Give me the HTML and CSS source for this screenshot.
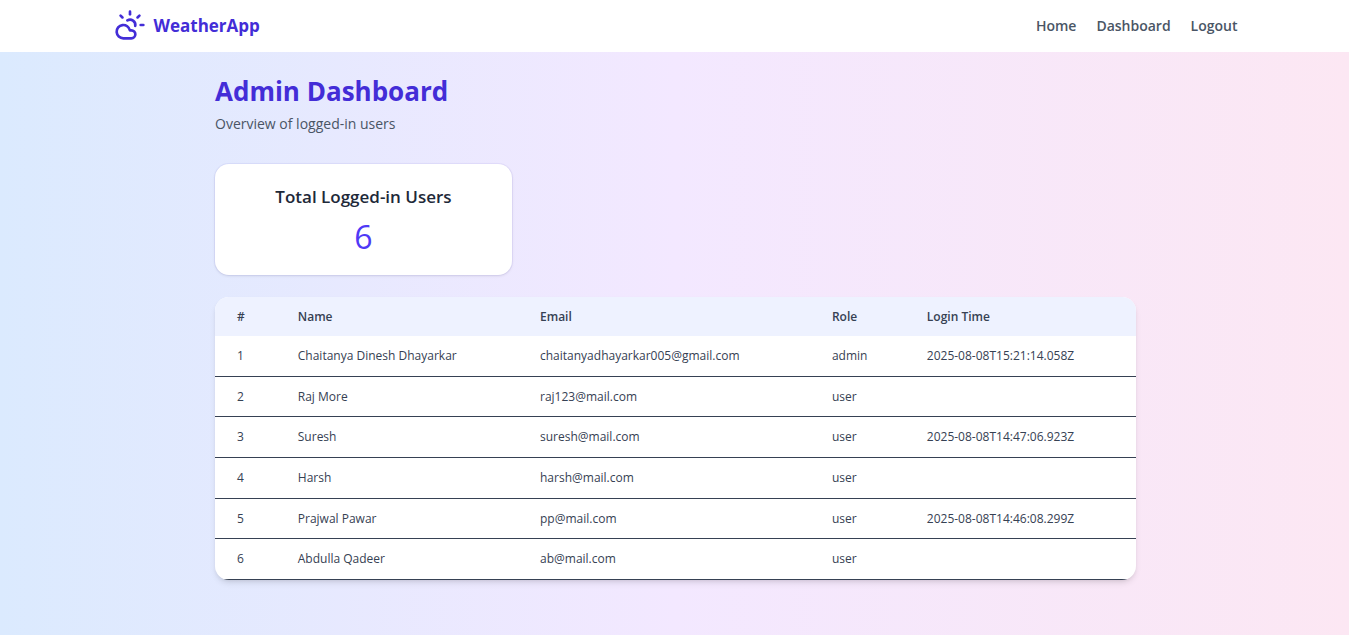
FILE: index.html
```html
<!DOCTYPE html>
<html lang="en">
<head>
<meta charset="utf-8">
<meta name="viewport" content="width=device-width, initial-scale=1">
<title>WeatherApp</title>
<link rel="stylesheet" href="styles.css">
</head>
<body>
<header class="topbar">
  <div class="topbar-inner">
    <a class="brand" href="#">
      <svg class="brand-icon" viewBox="0 0 24 24" fill="none" stroke="currentColor" stroke-width="2" stroke-linecap="round" stroke-linejoin="round" aria-hidden="true">
        <path d="M12 2v2"/><path d="m4.93 4.93 1.41 1.41"/><path d="M20 12h2"/><path d="m19.07 4.93-1.41 1.41"/>
        <path d="M15.947 12.65a4 4 0 0 0-5.925-4.128"/>
        <path d="M13 22H7a5 5 0 1 1 4.9-6H13a3 3 0 0 1 0 6Z"/>
      </svg>
      <span>WeatherApp</span>
    </a>
    <nav class="links">
      <a href="#">Home</a>
      <a href="#">Dashboard</a>
      <a href="#">Logout</a>
    </nav>
  </div>
</header>
<main class="content">
  <h1 class="title">Admin Dashboard</h1>
  <p class="subtitle">Overview of logged-in users</p>
  <div class="stats">
    <section class="stat">
      <h2 class="stat-label">Total Logged-in Users</h2>
      <p class="stat-value">6</p>
    </section>
  </div>
  <div class="panel">
    <table class="users">
      <colgroup><col class="c-num"><col class="c-name"><col class="c-email"><col class="c-role"><col class="c-time"></colgroup>
      <thead><tr><th>#</th><th>Name</th><th>Email</th><th>Role</th><th>Login Time</th></tr></thead>
      <tbody>
        <tr><td>1</td><td>Chaitanya Dinesh Dhayarkar</td><td>chaitanyadhayarkar005@gmail.com</td><td>admin</td><td>2025-08-08T15:21:14.058Z</td></tr>
        <tr><td>2</td><td>Raj More</td><td>raj123@mail.com</td><td>user</td><td></td></tr>
        <tr><td>3</td><td>Suresh</td><td>suresh@mail.com</td><td>user</td><td>2025-08-08T14:47:06.923Z</td></tr>
        <tr><td>4</td><td>Harsh</td><td>harsh@mail.com</td><td>user</td><td></td></tr>
        <tr><td>5</td><td>Prajwal Pawar</td><td>pp@mail.com</td><td>user</td><td>2025-08-08T14:46:08.299Z</td></tr>
        <tr><td>6</td><td>Abdulla Qadeer</td><td>ab@mail.com</td><td>user</td><td></td></tr>
      </tbody>
    </table>
  </div>
</main>
</body>
</html>
```
FILE: styles.css
```css
* { box-sizing: border-box; }
body {
  margin: 0;
  min-height: 100vh;
  font-family: "Open Sans", "Noto Sans", sans-serif;
  color: #364153;
  background: linear-gradient(to right, #dbeafe, #f3e8ff 50%, #fce7f3);
}
h1, h2, p { margin: 0; }
a { color: inherit; text-decoration: none; }

.topbar { background: #fff; }
.topbar-inner {
  display: flex;
  align-items: center;
  justify-content: space-between;
  max-width: 1152px;
  height: 52px;
  margin: 0 auto;
  padding: 0 13px 2px 15px;
}
.brand {
  display: flex;
  align-items: center;
  gap: 8px;
  color: #432dd7;
  font-size: 17px;
  font-weight: 700;
}
.brand-icon { width: 32px; height: 32px; }
.links {
  display: flex;
  gap: 20px;
  color: #4a5565;
  font-size: 14px;
  font-weight: 600;
}

.content {
  max-width: 923px;
  margin: 0 auto;
  padding: 22px 0 55px 2px;
}
.title {
  color: #432dd7;
  font-size: 26px;
  line-height: 34px;
  font-weight: 700;
}
.subtitle {
  margin-top: 6px;
  color: #4a5565;
  font-size: 14px;
  line-height: 20px;
}
.stats {
  display: grid;
  grid-template-columns: repeat(3, 1fr);
  gap: 15px;
  margin: 30px 0 22px;
}
.stat {
  padding: 20px 22px;
  border-radius: 14px;
  background: #fff;
  text-align: center;
  box-shadow: 0 0 0 1px #432dd70f, 0 1px 3px #0000001a;
}
.stat-label {
  color: #1e2939;
  font-size: 17px;
  line-height: 26px;
  font-weight: 600;
}
.stat-value {
  margin-top: 9px;
  color: #4f39f6;
  font-size: 32px;
  line-height: 36px;
}

.panel {
  overflow: hidden;
  border-radius: 14px;
  background: #fff;
  box-shadow: 0 4px 6px -1px #0000001a, 0 2px 4px -2px #0000001a;
}
.users {
  width: 100%;
  table-layout: fixed;
  border-spacing: 0;
  font-size: 12px;
  line-height: 18px;
  text-align: left;
}
.c-num { width: 6.6%; }
.c-name { width: 26.3%; }
.c-email { width: 31.7%; }
.c-role { width: 10.3%; }
.users th, .users td { padding: 0 0 0 22px; }
.users th {
  height: 39px;
  background: #eef2ff;
  font-weight: 600;
}
.users td {
  height: 41px;
  border-bottom: 1px solid #364153;
}
.users tr:nth-child(3n + 2) td { height: 40px; }
```
